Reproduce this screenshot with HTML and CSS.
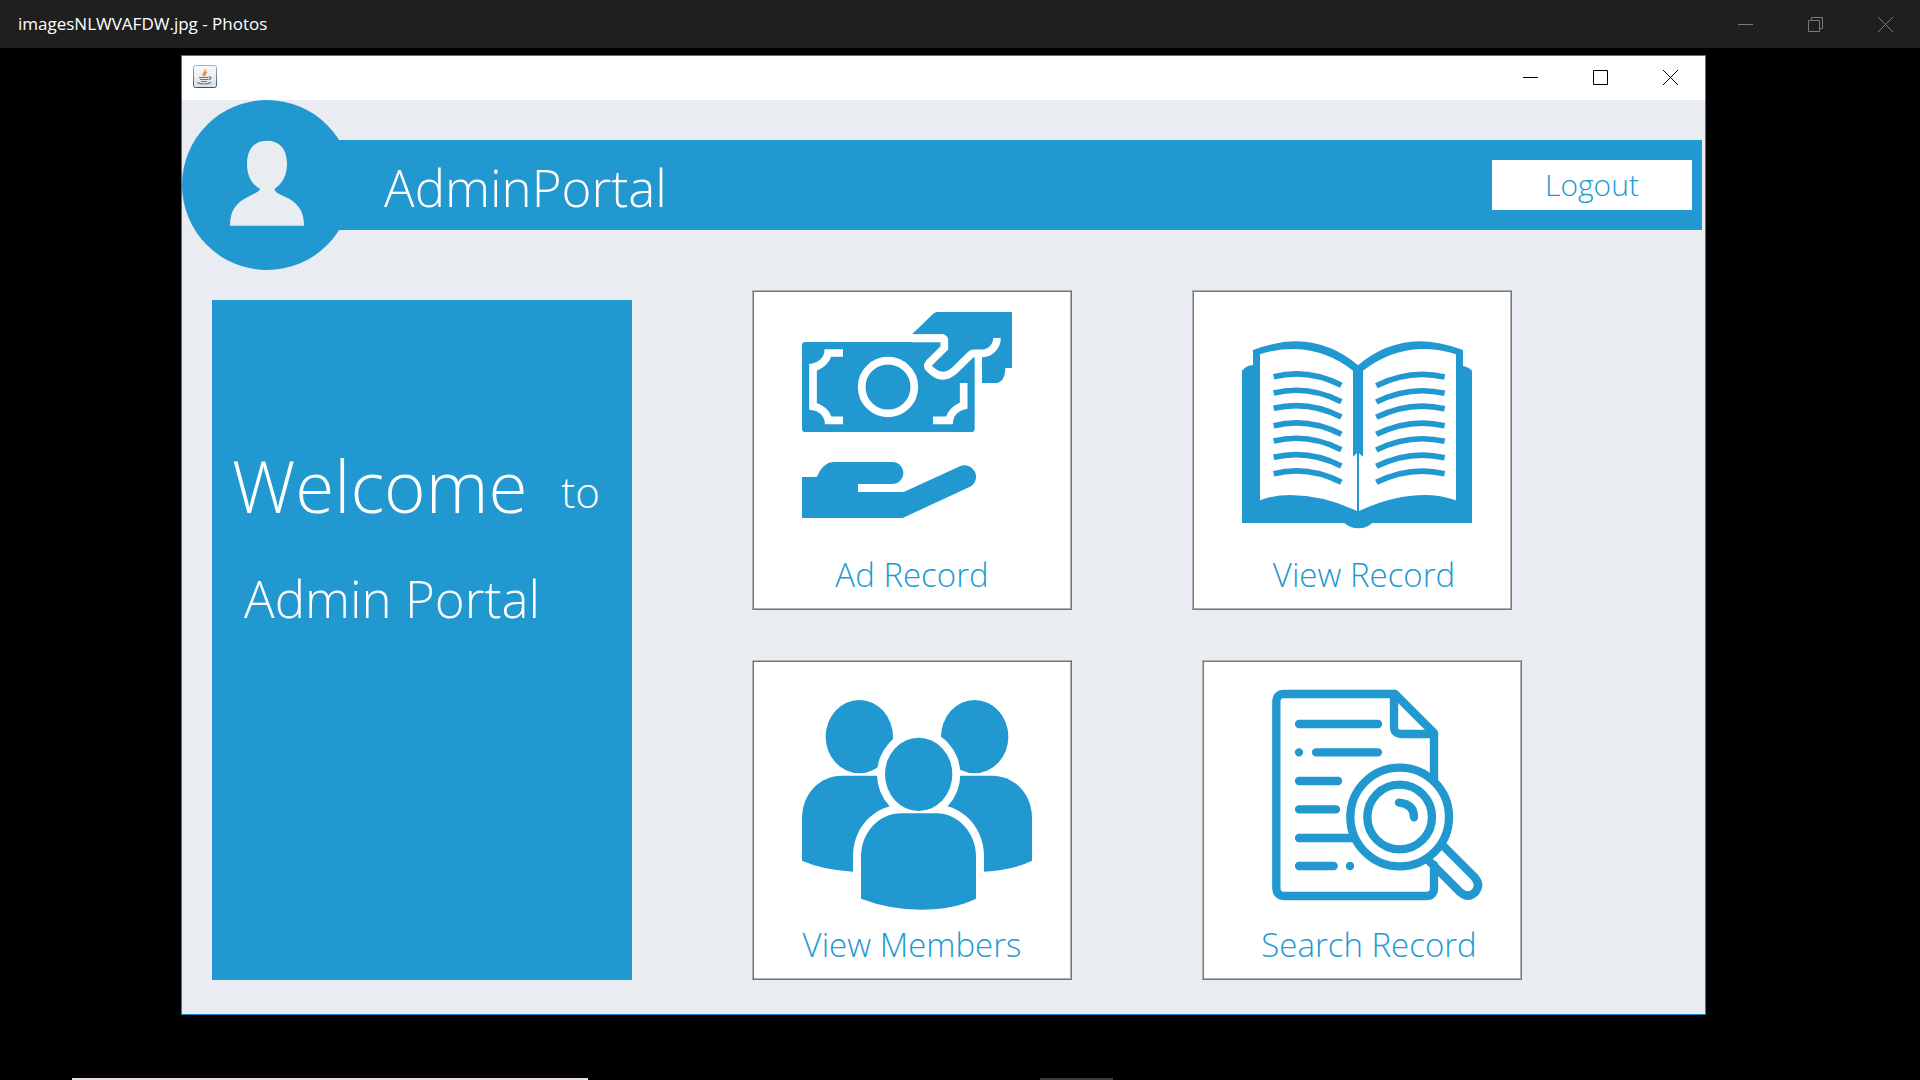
FILE: index.html
```html
<!DOCTYPE html>
<html lang="en">
<head>
<meta charset="utf-8">
<title>imagesNLWVAFDW.jpg - Photos</title>
<link rel="stylesheet" href="styles.css">
</head>
<body>
<header class="viewer-bar">
  <span class="viewer-title">imagesNLWVAFDW.jpg - Photos</span>
  <div class="controls controls-dim">
    <button class="control" aria-label="Minimize viewer"><svg viewBox="0 0 15 15"><path d="M0 7.5H15"/></svg></button>
    <button class="control" aria-label="Restore viewer"><svg viewBox="0 0 15 15"><path d="M.5 3.5H11.5V14.5H.5ZM3.5 3.5V.5H14.5V11.5H11.5"/></svg></button>
    <button class="control" aria-label="Close viewer"><svg viewBox="0 0 15 15"><path d="M0 0L15 15M15 0L0 15"/></svg></button>
  </div>
</header>

<div class="window">
  <div class="title-bar">
    <svg class="java" viewBox="0 0 24 24">
      <defs><linearGradient id="plate" x1="0" y1="0" x2="0" y2="1"><stop offset="0" stop-color="#fafafa"/><stop offset="1" stop-color="#dcdfe2"/></linearGradient><linearGradient id="rim" x1="0" y1="0" x2="0" y2="1"><stop offset="0" stop-color="#9fb4c4"/><stop offset="1" stop-color="#38556e"/></linearGradient></defs>
      <rect x=".5" y=".5" width="23" height="22" rx="2" fill="url(#plate)" stroke="url(#rim)"/>
      <path d="M12.500 4.500C13 7 9 7.500 10.500 11M14 7C11.500 8.500 11.500 9 12.300 11" fill="none" stroke="#f08a35" stroke-width="1.500"/>
      <path d="M6 12.500H15.500M7 14.500H15M8 16.500H14M16 12C19 11.500 18 14.500 15.500 14.500M4.500 17.500C7 19.500 14 19.500 18 17.500" fill="none" stroke="#58788f" stroke-width="1.200"/>
    </svg>
    <div class="controls">
      <button class="control" aria-label="Minimize"><svg viewBox="0 0 15 15"><path d="M0 7.500H15"/></svg></button>
      <button class="control" aria-label="Maximize"><svg viewBox="0 0 15 15"><path d="M.5 .5H14.500V14.500H.5Z"/></svg></button>
      <button class="control" aria-label="Close"><svg viewBox="0 0 15 15"><path d="M0 0L15 15M15 0L0 15"/></svg></button>
    </div>
  </div>

  <div class="portal-header">
    <svg class="avatar" viewBox="546 300 510 510">
      <circle class="ink" cx="801" cy="555" r="255"/>
      <path class="hollow" d="M690 677C690 630 710 606 745 590C772 577 779 572 780 566C755 553 741 528 741 492C741 445 765 422 801 422C837 422 861 445 861 492C861 528 845 553 824 566C824 575 832 580 855 590C893 608 912 630 912 677Z"/>
    </svg>
    <div class="band">
      <h1 class="band-title">AdminPortal</h1>
      <button class="logout">Logout</button>
    </div>
  </div>

  <main class="content">
    <aside class="welcome">
      <p class="welcome-line"><span class="welcome-word">Welcome</span><span class="welcome-to">to</span></p>
      <p class="welcome-name">Admin Portal</p>
    </aside>

    <div class="cards">
      <div class="card-row">
        <button class="card">
          <svg class="picture" viewBox="39 33 954 762">
            <rect class="ink" x="186" y="186" width="518" height="270" rx="10"/>
            <path class="ink" d="M516 163L579 102Q585 96 592 96H816V264H796C796 290 786 309 768 309H726V220H702L690 226L643 272Q605 305 568 266Q560 258 567 249L613 204V163Z"/>
            <path class="gap" d="M516 175H606Q613 175 613 182V204L567 249Q560 258 568 266Q605 305 643 272L690 226Q695 220 702 220H727C752 220 771 198 771 174"/>
            <path class="gap" d="M309 219H264C262 240 240 259 219 262V379C240 381 262 400 265 421H309"/>
            <path class="gap" d="M579 421H628C630 400 650 381 671 377V309"/>
            <circle class="gap" cx="444" cy="321" r="79"/>
            <path class="ink" d="M186 591H227C234 591 234 582 239 574C251 556 264 546 283 546H457A33 33 0 0 1 457 612H354V636H491L660 559A34 34 0 0 1 690 620L488 714H186Z"/>
          </svg>
          <span class="label">Ad Record</span>
        </button>
        <button class="card card-bright">
          <svg class="picture" viewBox="39 33 954 762">
            <path class="ink" d="M186 272Q200 256 219 255V210Q290 184 350 184Q452 186 534 256Q616 186 718 184Q778 184 849 210V258Q866 261 876 272V729H577Q560 745 535 745Q510 745 493 729H186Z"/>
            <path class="paper" d="M240 223Q285 207 345 207Q440 210 519 272V530L531 520V693Q430 645 330 645Q280 645 240 661Z"/>
            <path class="paper" d="M828 223Q783 207 723 207Q630 210 549 272V530L537 520V693Q640 645 735 645Q780 645 828 661Z"/>
            <g class="verse">
              <path d="M281 290Q385 265 484 316"/><path d="M281 339Q385 314 484 365"/><path d="M281 385Q385 360 484 411"/><path d="M281 437Q385 412 484 463"/><path d="M281 483Q385 458 484 509"/><path d="M281 532Q385 507 484 558"/><path d="M281 581Q385 556 484 607"/>
              <path d="M589 317Q690 267 794 291"/><path d="M589 366Q690 316 794 340"/><path d="M589 412Q690 362 794 386"/><path d="M589 463Q690 413 794 437"/><path d="M589 510Q690 460 794 484"/><path d="M589 559Q690 509 794 533"/><path d="M589 607Q690 557 794 581"/>
            </g>
          </svg>
          <span class="label label-inset">View Record</span>
        </button>
      </div>
      <div class="card-row card-row-wide">
        <button class="card">
          <svg class="picture" viewBox="39 33 954 762">
            <ellipse class="ink" cx="358" cy="260" rx="101" ry="110"/>
            <ellipse class="ink" cx="704" cy="260" rx="101" ry="110"/>
            <path class="ink" d="M186 632V505C186 430 240 377 306 377H480V665H339Q250 660 186 632Z"/>
            <path class="ink" d="M876 632V505C876 430 822 377 756 377H590V665H732Q820 660 876 632Z"/>
            <ellipse class="paper" cx="536" cy="373" rx="125" ry="133"/>
            <path class="paper" d="M339 670V620C339 540 390 485 450 469H622C690 488 732 550 732 620V670Z"/>
            <ellipse class="ink" cx="536" cy="373" rx="101" ry="110"/>
            <path class="ink" d="M363 746V620C363 545 420 490 483 490H590C650 490 708 545 708 620V746Q640 779 543 779Q450 779 363 746Z"/>
          </svg>
          <span class="label">View Members</span>
        </button>
        <button class="card card-bright">
          <svg class="picture" viewBox="39 33 954 762">
            <g class="outline">
              <path d="M732 385V249L615 132H282Q259 132 259 157V712Q259 738 282 738H708Q732 738 732 714V645"/>
              <path d="M612 132V230Q612 252 634 252H732"/>
              <path d="M327 222H564M327 307H327.1M378 307H564M327 393H444M327 478H438M327 564H490M327 648H431M480 648H480.1"/>
              <circle cx="629" cy="501" r="148"/>
              <circle cx="629" cy="501" r="97"/>
              <path d="M627 458Q672 462 672 502"/>
              <path d="M762 590L852 680Q874 704 856 726Q834 748 810 726L716 632"/>
            </g>
          </svg>
          <span class="label label-inset-small">Search Record</span>
        </button>
      </div>
    </div>
  </main>
</div>

<footer class="task-strip">
  <span class="task-active"></span>
  <span class="task-idle"></span>
</footer>
</body>
</html>
```
FILE: styles.css
```css
* { box-sizing: border-box; }

body {
  margin: 0;
  min-height: 100vh;
  display: flex;
  flex-direction: column;
  background: #000;
  font-family: "Open Sans", "Noto Sans", sans-serif;
}

button {
  font: inherit;
  border: 0;
  padding: 0;
  background: none;
}

h1, p { margin: 0; font-weight: 300; }

.viewer-bar {
  height: 48px;
  display: flex;
  align-items: center;
  justify-content: space-between;
  padding-left: 18px;
  background: #1f1f1f;
  color: #fff;
}

.viewer-title { font-size: 17px; line-height: 24px; }

.controls { display: flex; height: 42px; color: #000; }
.controls-dim { color: #797979; }

.control {
  width: 70px;
  display: flex;
  align-items: center;
  justify-content: center;
  color: inherit;
}

.control svg {
  width: 15px;
  height: 15px;
  fill: none;
  stroke: currentColor;
}

.window {
  margin: 7px 214px 0 181px;
  border: 1px solid #1c7fc9;
  background: #e9edf2;
}

.title-bar {
  height: 44px;
  display: flex;
  align-items: center;
  justify-content: space-between;
  padding: 0 0 2px 11px;
  background: #fff;
}

.java { width: 24px; height: 24px; }

.portal-header {
  display: flex;
  align-items: center;
  padding-right: 3px;
}

.avatar {
  position: relative;
  flex: none;
  width: 170px;
  height: 170px;
}

.ink { fill: #2298d1; }
.hollow { fill: #e9edf2; }
.paper { fill: #fff; }
.gap { fill: none; stroke: #fff; stroke-width: 23; }
.verse { fill: none; stroke: #2298d1; stroke-width: 17; }
.outline {
  fill: none;
  stroke: #2298d1;
  stroke-width: 25;
  stroke-linecap: round;
  stroke-linejoin: round;
}

.band {
  flex: 1;
  height: 90px;
  margin-left: -85px;
  padding: 0 10px 0 117px;
  display: flex;
  align-items: center;
  justify-content: space-between;
  background: #2298d1;
}

.band-title {
  padding-top: 4px;
  color: #fff;
  font-size: 51px;
  line-height: 80px;
}

.logout {
  width: 200px;
  height: 50px;
  background: #fff;
  color: #2298d1;
  font-size: 30px;
  font-weight: 300;
  line-height: 50px;
}

.content {
  display: flex;
  gap: 120px;
  padding: 20px 30px 34px;
}

.welcome {
  width: 420px;
  margin-top: 10px;
  padding: 136px 20px 0;
  background: #2298d1;
  color: #fff;
}

.welcome-line {
  display: flex;
  align-items: center;
  justify-content: space-between;
  padding-right: 12px;
}

.welcome-word { font-size: 71px; line-height: 100px; }
.welcome-to { padding-top: 12px; font-size: 42px; line-height: 60px; }

.welcome-name {
  margin-top: 22px;
  padding-left: 12px;
  font-size: 51px;
  line-height: 80px;
}

.cards {
  display: flex;
  flex-direction: column;
  gap: 50px;
}

.card-row { display: flex; gap: 120px; }
.card-row-wide { gap: 130px; }

/* Etched frame: a grey line and a blue line side by side. */
.card {
  width: 320px;
  height: 320px;
  display: flex;
  flex-direction: column;
  border: 1px solid #0c99c6;
  border-top-color: #aeb0b2;
  border-left-color: #aeb0b2;
  box-shadow: inset 1px 1px #0c99c6, inset -1px -1px #aeb0b2;
  background: #fff;
  color: #2298d1;
}

.card-bright {
  border-right-color: #1099ee;
  border-bottom-color: #1099ee;
  box-shadow: inset 1px 1px #1099ee, inset -1px -1px #aeb0b2;
}

.picture { width: 318px; height: 254px; }

.label {
  width: 100%;
  font-size: 33px;
  font-weight: 300;
  line-height: 60px;
  text-align: center;
}

.label-inset { padding-left: 24px; }
.label-inset-small { padding-left: 14px; }

.task-strip {
  display: flex;
  gap: 452px;
  height: 2px;
  margin-top: auto;
  padding-left: 72px;
}

.task-active { width: 516px; background: #e4dfe0; }
.task-idle { width: 73px; background: #3c3c3c; }
```
